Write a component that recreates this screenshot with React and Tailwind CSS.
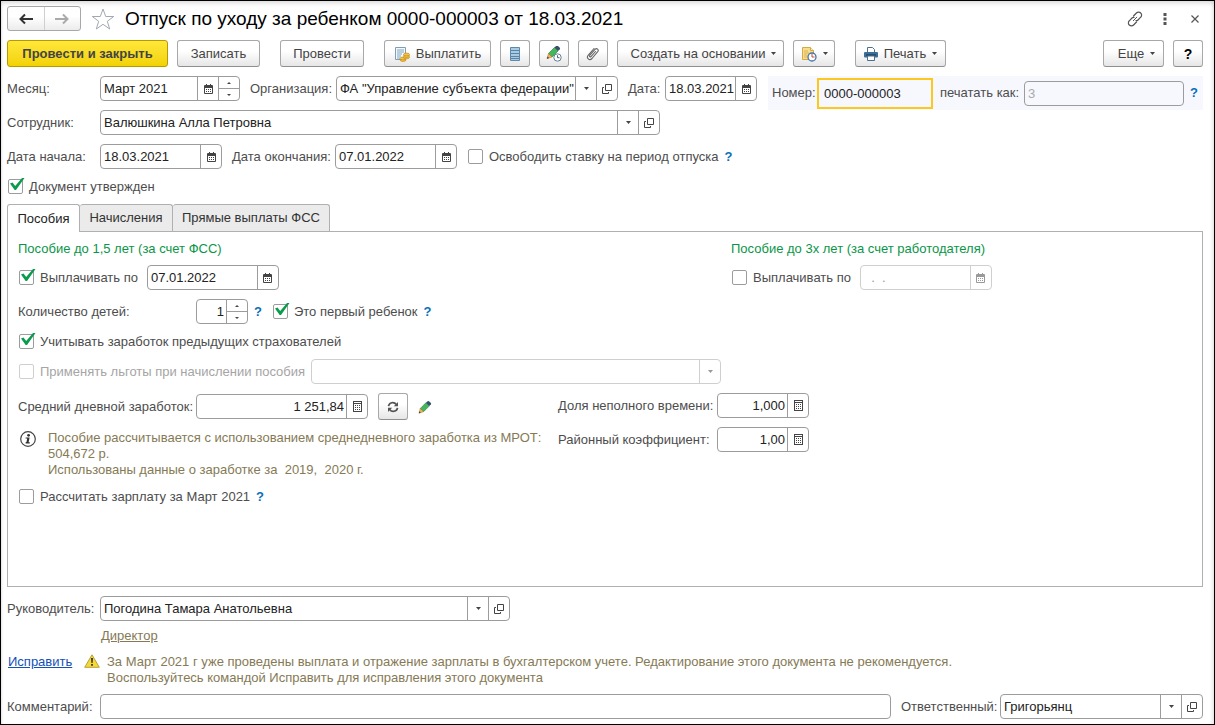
import React from 'react'

/* ---------- icons ---------- */

const CalendarIcon = () => (
  <svg width="9" height="10" viewBox="0 0 9 10" fill="currentColor">
    <path fillRule="evenodd" d="M1 1h1V0h1v1h3V0h1v1h1q1 0 1 1v7q0 1-1 1H1q-1 0-1-1V2q0-1 1-1zM1 4v5h7V4z" />
    <path d="M2 5h1v1H2zM4 5h1v1H4zM6 5h1v1H6zM2 7h1v1H2zM4 7h1v1H4zM6 7h1v1H6z" />
  </svg>
)

const CalcIcon = () => (
  <svg width="9" height="11" viewBox="0 0 9 11" fill="currentColor">
    <path fillRule="evenodd" d="M0 0h9v11H0zM1 1v1h7V1zM1 3v7h7V3z" />
    <path d="M2 4h1v1H2zM4 4h1v1H4zM6 4h1v1H6zM2 6h1v1H2zM4 6h1v1H4zM6 6h1v1H6zM2 8h1v1H2zM4 8h1v1H4zM6 8h1v1H6z" />
  </svg>
)

const OpenIcon = () => (
  <svg width="10" height="10" viewBox="0 0 10 10" fill="none" stroke="currentColor">
    <path d="M3.500 0.500h6v6h-6zM2 3.500H.5v6h6V8" />
  </svg>
)

const Caret = () => (
  <svg width="5" height="3" viewBox="0 0 5 3" fill="currentColor">
    <path d="M0 0h5L2.500 3z" />
  </svg>
)

const ArrowIcon = ({ flip }) => (
  <svg width="14" height="12" viewBox="0 0 14 12" fill="none" stroke="currentColor" strokeWidth="2" className={flip ? 'rotate-180' : ''}>
    <path d="M2 6h12" />
    <path d="M6 1.500 1.500 6 6 10.500" />
  </svg>
)

const StarIcon = () => (
  <svg width="24" height="22" viewBox="0 0 24 22" fill="#fff" stroke="#a3a9b0">
    <path d="M12 1l2.700 7.500h8l-6.400 4.800 2.400 7.700L12 16.300 5.300 21l2.400-7.700L1.300 8.500h8z" />
  </svg>
)

const LinkIcon = () => (
  <svg width="16" height="16" viewBox="0 0 16 16" fill="none" stroke="#555" strokeWidth="1.200" strokeLinecap="round">
    <path d="M6.500 5l2.900-3a2.900 2.900 0 0 1 4.300 0 2.900 2.900 0 0 1 0 4.200L11 9c-.6.600-1.300.8-2 .7" />
    <path d="M9.500 11L6.600 14a2.900 2.900 0 0 1-4.300 0 2.900 2.900 0 0 1 0-4.200L5 7c.6-.6 1.300-.8 2-.7" />
    <path d="M6.300 9.700l3.500-3.500" strokeWidth="1" />
  </svg>
)

const PayIcon = () => (
  <svg width="16" height="16" viewBox="0 0 16 16">
    <path d="M1.500 1.500h10v12h-10z" fill="#f3f8fb" stroke="#7f9db5" />
    <path d="M3 4h7M3 6h7M3 8h5M3 10h4M3 12h3" stroke="#7da7c4" />
    <g fill="#f6c445" stroke="#c38a1d" strokeWidth=".7">
      <ellipse cx="9" cy="14" rx="3" ry="1.400" />
      <ellipse cx="9" cy="12.500" rx="3" ry="1.400" />
      <ellipse cx="12.500" cy="11.500" rx="3" ry="1.400" />
      <ellipse cx="12.500" cy="10" rx="3" ry="1.400" />
      <ellipse cx="12.500" cy="8.500" rx="3" ry="1.400" />
    </g>
  </svg>
)

const RegisterIcon = () => (
  <svg width="10" height="14" viewBox="0 0 10 14">
    <path d="M.5.500h9v13h-9z" fill="#a9cbe2" stroke="#5d88aa" />
    <path d="M1 3.500h8M1 6.500h8M1 9.500h8M1 11.500h8" stroke="#5585aa" />
  </svg>
)

const PencilShape = () => (
  <>
    <path d="M2.500 8.500 8.500 2.500 12 6 6 12z" fill="#45b65c" stroke="#2b8a40" strokeWidth=".7" />
    <path d="M8.500 2.500l1.800-1.700q.8-.6 1.500 0l2 2q.6.700 0 1.400L12 6z" fill="#38506b" />
    <path d="M2.500 8.500L6 12l-5 1.700z" fill="#f0b45a" stroke="#a96d22" strokeWidth=".5" />
    <path d="M1.600 11.600L1 13.700l2-.7z" fill="#333" />
  </>
)

const PencilIcon = () => (
  <svg width="14" height="14" viewBox="0 0 15 14">
    <PencilShape />
  </svg>
)

const PencilClockIcon = () => (
  <svg width="16" height="16" viewBox="0 0 16 16">
    <g transform="translate(0 -1)"><PencilShape /></g>
    <circle cx="11.500" cy="11.500" r="3.700" fill="#fff" stroke="#647f96" />
    <path d="M11.500 9.300v2.400h2" fill="none" stroke="#4a6177" />
  </svg>
)

const ClipIcon = () => (
  <svg width="14" height="14" viewBox="0 0 14 14" fill="none" stroke="#666" strokeWidth="1.100" strokeLinecap="round">
    <path d="M9.500 4.500L5 9.500c-.9.900-2.200-.3-1.300-1.200L9 2.300c1.800-1.700 4.200.5 2.700 2.400L6 11.500c-2.600 2.700-6.200-.6-3.700-3.400L8 1.500" />
  </svg>
)

const DocClockIcon = () => (
  <svg width="16" height="16" viewBox="0 0 16 16">
    <path d="M1.500 1.500h8l3 3v9h-11z" fill="#f8dd8c" stroke="#d2aa48" />
    <path d="M9.500 1.500v3h3" fill="#fff3c8" stroke="#d2aa48" />
    <path d="M3 5h4M3 7h5M3 9h3M3 11h3" stroke="#d9b35a" />
    <circle cx="11" cy="11" r="4" fill="#fff" stroke="#3f75a8" strokeWidth="1.300" />
    <path d="M11 8v3h2.500" fill="none" stroke="#d2453c" />
  </svg>
)

const PrinterIcon = () => (
  <svg width="14" height="14" viewBox="0 0 14 14">
    <path d="M3.500 5V.500h5l2 2V5" fill="#fff" stroke="#4a6f8f" />
    <rect x="0" y="5" width="14" height="5.500" rx="1" fill="#3d6e97" />
    <path d="M2 8h10" stroke="#16324a" />
    <path d="M3.500 9h7v4.500h-7z" fill="#fff" stroke="#4a6f8f" />
  </svg>
)

const RefreshIcon = () => (
  <svg width="12" height="12" viewBox="0 0 12 12" fill="none" stroke="#555" strokeWidth="1.700">
    <path d="M1.500 5.200C2 1.500 7 .300 9.300 3.500" />
    <path d="M10.500 6.800C10 10.500 5 11.700 2.700 8.500" />
    <path d="M11 1v4.300H6.800zM1 11V6.700h4.200z" fill="#555" stroke="none" />
  </svg>
)

const InfoIcon = () => (
  <svg width="16" height="16" viewBox="0 0 16 16">
    <circle cx="8" cy="8" r="7.300" fill="#fff" stroke="#444" strokeWidth="1.200" />
    <circle cx="8.600" cy="4.300" r="1.400" fill="#333" />
    <path d="M5.600 6.400h4L8.600 11.200h1.200v1.200H5.600v-1.100l.9-.2.700-3.500H5.600z" fill="#333" />
  </svg>
)

const WarningIcon = () => (
  <svg width="16" height="14" viewBox="0 0 16 14">
    <path d="M8 .800 15.300 13.300H.700z" fill="#f5d935" stroke="#b9a13a" strokeLinejoin="round" />
    <path d="M7 4h2l-.4 5H7.400zM7.100 10h1.800v1.800H7.100z" fill="#333" />
  </svg>
)

/* ---------- controls ---------- */

const Button = ({ children, className = '', ...props }) => (
  <button
    type="button"
    className={`flex h-[27px] shrink-0 items-center justify-center rounded-[3px] border border-[#a8a8a8] border-b-[#8f8f8f] bg-linear-to-b from-white from-40% to-[#e6e6e6] text-[#444] ${className}`}
    {...props}
  >
    {children}
  </button>
)

const Cell = ({ label, disabled, children }) => (
  <button
    type="button"
    aria-label={label}
    disabled={disabled}
    className={`flex w-[21px] shrink-0 items-center justify-center border-l ${disabled ? 'border-[#cfcfcf] text-[#999]' : 'border-[#9c9c9c] text-[#444]'}`}
  >
    {children}
  </button>
)

const DateCell = ({ disabled }) => <Cell label="Выбрать дату" disabled={disabled}><CalendarIcon /></Cell>
const CalcCell = () => <Cell label="Калькулятор"><CalcIcon /></Cell>
const LookupCells = () => (
  <>
    <Cell label="Выбрать из списка"><Caret /></Cell>
    <Cell label="Открыть"><OpenIcon /></Cell>
  </>
)

const Spinner = () => (
  <div className="flex w-[21px] shrink-0 flex-col border-l border-[#9c9c9c] text-[#444]">
    <button type="button" aria-label="Увеличить" className="flex flex-1 items-center justify-center border-b border-[#9c9c9c]">
      <svg width="4" height="2" viewBox="0 0 4 2" fill="currentColor"><path d="M0 2h4L2 0z" /></svg>
    </button>
    <button type="button" aria-label="Уменьшить" className="flex flex-1 items-center justify-center">
      <svg width="4" height="2" viewBox="0 0 4 2" fill="currentColor"><path d="M0 0h4L2 2z" /></svg>
    </button>
  </div>
)

const Field = ({ id, value, width = '', right, disabled, label, children }) => (
  <div className={`flex h-[25px] overflow-hidden rounded-[4px] border bg-white ${disabled ? 'border-[#cfcfcf]' : 'border-[#9c9c9c]'} ${width}`}>
    <input
      id={id}
      aria-label={label}
      type="text"
      defaultValue={value}
      disabled={disabled}
      className={`min-w-0 flex-1 bg-transparent text-[#222] outline-none disabled:text-[#999] ${right ? 'pr-[2px] text-right' : 'pl-[3px]'}`}
    />
    {children}
  </div>
)

const Check = ({ children, checked, disabled }) => (
  <label className={`flex h-[17px] items-center gap-[6px] whitespace-nowrap ${disabled ? 'text-[#a5a5a5]' : ''}`}>
    <span className="relative flex">
      <input
        type="checkbox"
        defaultChecked={checked}
        disabled={disabled}
        className="peer size-[15px] appearance-none rounded-[2px] border border-[#9c9c9c] bg-white disabled:border-[#cfcfcf]"
      />
      <svg width="15" height="13" viewBox="0 0 15 13" className="pointer-events-none absolute -top-px left-[2px] hidden peer-checked:block">
        <path d="M0 5.500 2.500 4.500 5.200 8 12 0H14.500L6 12H4.700z" fill="#0a9b4c" />
      </svg>
    </span>
    {children}
  </label>
)

const Help = () => (
  <button type="button" aria-label="Справка" className="font-bold text-[#0a6fb8]">?</button>
)

const tabs = [
  { name: 'Пособия', width: 'w-[73px]' },
  { name: 'Начисления', width: 'w-[93px]' },
  { name: 'Прямые выплаты ФСС', width: 'w-[157px]' },
]

export default function App() {
  return (
    <div
      className="flex min-h-screen flex-col border border-black bg-white pt-[5px] pr-[11px] pb-[5px] pl-[6px] text-[13px] leading-4 text-[#4d4d4d] shadow-[inset_0_4px_5px_-2px_rgba(0,0,0,0.15),inset_-3px_0_4px_-2px_rgba(0,0,0,0.12),inset_3px_0_2px_-2px_rgba(0,0,0,0.08)]"
      style={{ fontFamily: '"Liberation Sans", Arial, sans-serif' }}
    >
      <header className="flex h-[25px] items-center">
        <div className="flex h-[25px] w-[74px] rounded-[3px] border border-[#a8a8a8] bg-linear-to-b from-white from-40% to-[#ececec]">
          <button type="button" aria-label="Назад" className="flex flex-1 items-center justify-center text-[#333]"><ArrowIcon /></button>
          <button type="button" aria-label="Вперед" className="flex flex-1 items-center justify-center border-l border-[#cfcfcf] text-[#aaa]"><ArrowIcon flip /></button>
        </div>
        <button type="button" aria-label="В избранное" className="ml-[10px]"><StarIcon /></button>
        <h1 className="ml-[10px] text-[19px] leading-6 text-black">Отпуск по уходу за ребенком 0000-000003 от 18.03.2021</h1>
        <div className="ml-auto flex items-center text-[#555]">
          <button type="button" aria-label="Ссылка"><LinkIcon /></button>
          <button type="button" aria-label="Меню" className="ml-[20px]">
            <svg width="4" height="12" viewBox="0 0 4 12" fill="currentColor"><path d="M.5 0h3v3h-3zM.5 4.500h3v3h-3zM.5 9h3v3h-3z" /></svg>
          </button>
          <button type="button" aria-label="Закрыть" className="mr-1 ml-[24px]">
            <svg width="8" height="8" viewBox="0 0 8 8" stroke="currentColor" strokeWidth="1.200"><path d="M.5.500l7 7M7.500.500l-7 7" /></svg>
          </button>
        </div>
      </header>

      <div className="mt-[9px] flex gap-[9px]">
        <button type="button" className="h-[27px] w-[161px] shrink-0 rounded-[3px] border border-[#b59b00] bg-linear-to-b from-[#ffe838] to-[#f3d200] font-bold text-[#444]">
          Провести и закрыть
        </button>
        <Button className="w-[83px]">Записать</Button>
        <Button className="ml-[11px] w-[84px]">Провести</Button>
        <Button className="ml-[11px] w-[107px] gap-[6px]"><PayIcon />Выплатить</Button>
        <Button className="w-[30px]" aria-label="Движения документа"><RegisterIcon /></Button>
        <Button className="w-[30px]" aria-label="История изменений"><PencilClockIcon /></Button>
        <Button className="w-[30px]" aria-label="Присоединенные файлы"><ClipIcon /></Button>
        <Button className="w-[167px] gap-[6px] pl-[6px]">Создать на основании<Caret /></Button>
        <Button className="w-[42px] gap-[6px]" aria-label="Напоминание"><DocClockIcon /><Caret /></Button>
        <Button className="ml-[11px] w-[91px] gap-[6px]"><PrinterIcon />Печать<Caret /></Button>
        <Button className="ml-auto w-[61px] gap-[6px] pl-[6px]">Еще<Caret /></Button>
        <Button className="w-[30px] text-[14px] font-bold text-black" aria-label="Справка">?</Button>
      </div>

      <div className="mt-[9px] flex items-start">
        <div className="flex shrink-0 items-center">
          <label htmlFor="month" className="w-[93px]">Месяц:</label>
          <Field id="month" value="Март 2021" width="w-[140px]"><DateCell /><Spinner /></Field>
          <label htmlFor="org" className="ml-[10px] w-[86px]">Организация:</label>
          <Field id="org" value={'ФА "Управление субъекта федерации"'} width="w-[282px]"><LookupCells /></Field>
          <label htmlFor="date" className="ml-[10px] w-[37px]">Дата:</label>
          <Field id="date" value="18.03.2021" width="w-[92px]"><DateCell /></Field>
        </div>
        <div className="ml-[11px] flex h-[34px] min-w-0 flex-1 items-center bg-[#f7f8fe] pr-[5px] pl-[4px]">
          <label htmlFor="number" className="w-[45px] shrink-0">Номер:</label>
          <input id="number" type="text" defaultValue="0000-000003" className="h-[31px] w-[116px] shrink-0 border-2 border-[#fbc81f] bg-[#f7f8fe] pl-[5px] text-[#222] outline-none" />
          <label htmlFor="print-as" className="ml-[7px] w-[84px] shrink-0 whitespace-nowrap">печатать как:</label>
          <input id="print-as" type="text" placeholder="3" className="h-[25px] w-0 flex-1 rounded-[4px] border border-[#9c9c9c] bg-[#f7f8fe] pl-[3px] outline-none placeholder:text-[#aaa]" />
          <div className="ml-[6px] flex"><Help /></div>
        </div>
      </div>

      <div className="flex items-center">
        <label htmlFor="employee" className="w-[93px]">Сотрудник:</label>
        <Field id="employee" value="Валюшкина Алла Петровна" width="w-[560px]"><LookupCells /></Field>
      </div>

      <div className="mt-[9px] flex items-center">
        <label htmlFor="date-from" className="w-[93px]">Дата начала:</label>
        <Field id="date-from" value="18.03.2021" width="w-[122px]"><DateCell /></Field>
        <label htmlFor="date-to" className="ml-[10px] w-[103px]">Дата окончания:</label>
        <Field id="date-to" value="07.01.2022" width="w-[122px]"><DateCell /></Field>
        <div className="ml-[11px] flex gap-[6px]">
          <Check>Освободить ставку на период отпуска</Check>
          <Help />
        </div>
      </div>

      <div className="mt-[9px] flex pl-px">
        <Check checked>Документ утвержден</Check>
      </div>

      <div role="tablist" className="mt-[9px] flex h-[27px]">
        {tabs.map((tab, i) => (
          <button
            key={tab.name}
            type="button"
            role="tab"
            aria-selected={i === 0}
            className={`rounded-t-[3px] border border-b-0 border-[#b0b0b0] ${tab.width} ${i === 0 ? 'relative -mb-px bg-white text-[#222]' : 'border-l-0 bg-[#ebebeb] text-[#333]'}`}
          >
            {tab.name}
          </button>
        ))}
      </div>

      <main className="flex-1 border border-[#b0b0b0] px-[10px] pt-[9px] pb-6">
        <div className="flex">
          <section className="w-[713px]">
            <h2 className="text-[#0a9648]">Пособие до 1,5 лет (за счет ФСС)</h2>
            <div className="mt-2 flex items-center gap-[9px] pl-px">
              <Check checked>Выплачивать по</Check>
              <Field label="Выплачивать до 1,5 лет по" value="07.01.2022" width="w-[132px]"><DateCell /></Field>
            </div>
          </section>
          <section>
            <h2 className="text-[#0a9648]">Пособие до 3х лет (за счет работодателя)</h2>
            <div className="mt-2 flex items-center gap-[9px] pl-px">
              <Check>Выплачивать по</Check>
              <Field label="Выплачивать до 3х лет по" value="&nbsp; .&nbsp; ." width="w-[132px]" disabled><DateCell disabled /></Field>
            </div>
          </section>
        </div>

        <div className="mt-[9px] flex items-center">
          <label htmlFor="children" className="w-[178px]">Количество детей:</label>
          <Field id="children" value="1" width="w-[52px]" right><Spinner /></Field>
          <div className="ml-[6px] flex"><Help /></div>
          <div className="ml-[11px] flex gap-[6px]">
            <Check checked>Это первый ребенок</Check>
            <Help />
          </div>
        </div>

        <div className="mt-[9px] flex pl-px">
          <Check checked>Учитывать заработок предыдущих страхователей</Check>
        </div>

        <div className="mt-[9px] flex items-center gap-[6px] pl-px">
          <Check disabled>Применять льготы при начислении пособия</Check>
          <div className="flex h-[25px] w-[410px] rounded-[4px] border border-[#cfcfcf] bg-white">
            <select aria-label="Льгота" disabled className="min-w-0 flex-1 appearance-none bg-transparent" />
            <span className="flex w-[21px] items-center justify-center border-l border-[#cfcfcf] text-[#999]"><Caret /></span>
          </div>
        </div>

        <div className="mt-[9px] flex">
          <div className="w-[540px]">
            <div className="flex items-center">
              <label htmlFor="average" className="w-[178px]">Средний дневной заработок:</label>
              <Field id="average" value="1 251,84" width="w-[172px]" right><CalcCell /></Field>
              <Button className="ml-[10px] w-[30px]" aria-label="Обновить"><RefreshIcon /></Button>
              <button type="button" aria-label="Изменить" className="ml-[10px]"><PencilIcon /></button>
            </div>
            <div className="mt-[10px] flex gap-3 pl-[2px] text-[#857a55]">
              <span className="mt-px"><InfoIcon /></span>
              <p className="whitespace-pre">
                Пособие рассчитывается с использованием среднедневного заработка из МРОТ:<br />
                504,672 р.<br />
                Использованы данные о заработке за{'  '}2019,{'  '}2020 г.
              </p>
            </div>
          </div>
          <div className="flex flex-col gap-[9px]">
            <div className="flex items-center">
              <label htmlFor="part-time" className="w-[159px]">Доля неполного времени:</label>
              <Field id="part-time" value="1,000" width="w-[92px]" right><CalcCell /></Field>
            </div>
            <div className="flex items-center">
              <label htmlFor="district" className="w-[159px]">Районный коэффициент:</label>
              <Field id="district" value="1,00" width="w-[92px]" right><CalcCell /></Field>
            </div>
          </div>
        </div>

        <div className="mt-[10px] flex gap-[6px] pl-px">
          <Check>Рассчитать зарплату за Март 2021</Check>
          <Help />
        </div>
      </main>

      <div className="mt-[9px] flex items-center">
        <label htmlFor="manager" className="w-[93px]">Руководитель:</label>
        <Field id="manager" value="Погодина Тамара Анатольевна" width="w-[410px]"><LookupCells /></Field>
      </div>
      <div className="mt-[7px] flex pl-[94px]">
        <a href="#" className="text-[#857a55] underline">Директор</a>
      </div>

      <div className="mt-[10px] flex items-start pl-px">
        <a href="#" className="w-[76px] text-[#1350b8] underline">Исправить</a>
        <WarningIcon />
        <p className="ml-[7px] text-[#857a55]">
          За Март 2021 г уже проведены выплата и отражение зарплаты в бухгалтерском учете. Редактирование этого документа не рекомендуется.<br />
          Воспользуйтесь командой Исправить для исправления этого документа
        </p>
      </div>

      <div className="mt-2 flex items-center">
        <label htmlFor="comment" className="w-[93px]">Комментарий:</label>
        <Field id="comment" value="" width="flex-1" />
        <label htmlFor="responsible" className="ml-[10px] w-[99px]">Ответственный:</label>
        <Field id="responsible" value="Григорьянц" width="w-[203px]"><LookupCells /></Field>
      </div>
    </div>
  )
}
